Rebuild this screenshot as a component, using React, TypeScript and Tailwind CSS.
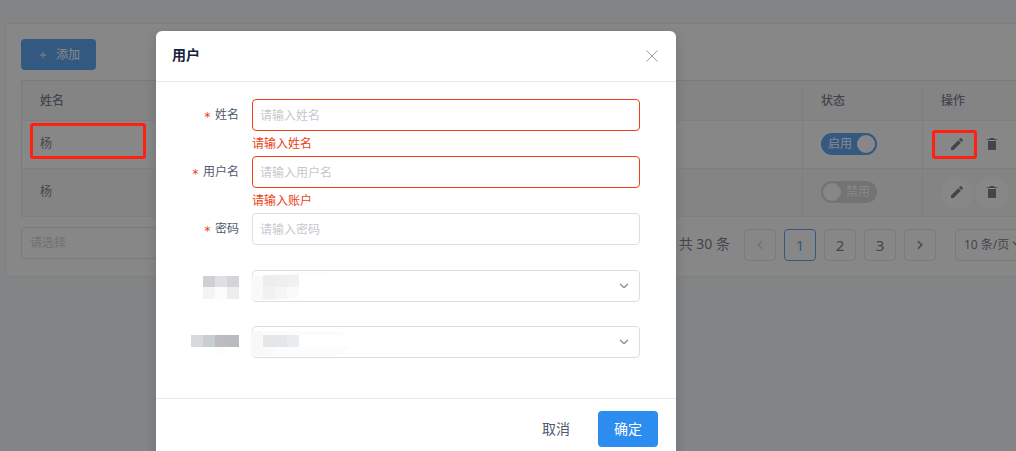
import { useState } from "react";
import type { ReactNode } from "react";
import {
  IoIosAdd,
  IoIosArrowBack,
  IoIosArrowDown,
  IoIosArrowForward,
  IoMdCreate,
  IoMdTrash,
} from "react-icons/io";

const users = [
  { id: 1, name: "杨", enabled: true },
  { id: 2, name: "杨", enabled: false },
];

const pageButton =
  "flex h-8 w-8 items-center justify-center rounded border text-[15px]";

function StatusSwitch({ initial }: { initial: boolean }) {
  const [on, setOn] = useState(initial);
  return (
    <button
      type="button"
      role="switch"
      aria-checked={on}
      aria-label="状态"
      onClick={() => setOn(!on)}
      className={`flex h-[22px] w-14 items-center justify-between rounded-full p-0.5 text-xs text-white ${
        on ? "bg-[#2d8cf0] pl-[7px]" : "flex-row-reverse bg-[#ccc] pr-[7px]"
      }`}
    >
      <span>{on ? "启用" : "禁用"}</span>
      <span className="h-[18px] w-[18px] rounded-full bg-white" />
    </button>
  );
}

function IconButton({ label, children }: { label: string; children: ReactNode }) {
  return (
    <button
      type="button"
      aria-label={label}
      className="flex h-8 w-8 items-center justify-center rounded-full bg-white pb-0.5 text-base text-[#515a6e]"
    >
      {children}
    </button>
  );
}

function UserTable() {
  return (
    <table className="w-full table-fixed border-collapse border border-[#dcdee2] text-left text-xs text-[#515a6e]">
      <thead>
        <tr className="h-10 border-b border-[#e8eaec] bg-[#f8f8f9]">
          <th className="border-r border-[#e8eaec] px-[18px] font-medium">姓名</th>
          <th className="w-[120px] border-r border-[#e8eaec] px-[18px] font-medium">状态</th>
          <th className="w-[117px] px-[18px] font-medium">操作</th>
        </tr>
      </thead>
      <tbody>
        {users.map((user) => (
          <tr key={user.id} className="h-12 border-b border-[#e8eaec] even:bg-[#f8f8f9]">
            <td className="border-r border-[#e8eaec] px-[18px] pb-0.5">{user.name}</td>
            <td className="border-r border-[#e8eaec] px-[18px] pb-0.5">
              <StatusSwitch initial={user.enabled} />
            </td>
            <td className="px-[18px]">
              <div className="flex gap-[3px]">
                <IconButton label="编辑">
                  <IoMdCreate />
                </IconButton>
                <IconButton label="删除">
                  <IoMdTrash />
                </IconButton>
              </div>
            </td>
          </tr>
        ))}
      </tbody>
    </table>
  );
}

function Pagination() {
  return (
    <nav className="flex items-center pt-0.5 text-[#515a6e]">
      <span className="mr-[14px] pb-0.5 text-sm">共 30 条</span>
      <div className="flex gap-2">
        <button type="button" aria-label="上一页" className={`${pageButton} border-[#dcdee2] text-[#c5c8ce]`}>
          <IoIosArrowBack size={12} stroke="currentColor" strokeWidth={16} />
        </button>
        <button type="button" className={`${pageButton} border-[#2d8cf0] text-[#2d8cf0]`}>
          1
        </button>
        <button type="button" className={`${pageButton} border-[#dcdee2]`}>
          2
        </button>
        <button type="button" className={`${pageButton} border-[#dcdee2]`}>
          3
        </button>
        <button type="button" aria-label="下一页" className={`${pageButton} border-[#dcdee2]`}>
          <IoIosArrowForward size={12} stroke="currentColor" strokeWidth={16} />
        </button>
      </div>
      <div className="relative ml-[19px] w-[85px]">
        <select
          aria-label="每页条数"
          className="h-8 w-full appearance-none rounded border border-[#dcdee2] bg-white pl-2 text-xs"
        >
          <option>10 条/页</option>
        </select>
        <IoIosArrowDown
          size={12}
          stroke="currentColor"
          strokeWidth={16}
          className="pointer-events-none absolute top-[9px] right-[17px]"
        />
      </div>
    </nav>
  );
}

type FieldProps = {
  id: string;
  label: string;
  placeholder: string;
  error?: string;
  type?: string;
};

function Field({ id, label, placeholder, error, type = "text" }: FieldProps) {
  return (
    <div className="flex h-[57px]">
      <label
        htmlFor={id}
        className="flex w-20 shrink-0 justify-end gap-1 pt-[7px] pr-[13px] text-xs leading-[18px] text-[#515a6e]"
      >
        <span className="pt-0.5 font-['DejaVu_Sans_Mono'] text-[#ed4014]">*</span>
        {label}
      </label>
      <div className="flex-1">
        <input
          id={id}
          type={type}
          placeholder={placeholder}
          className={`block h-8 w-full rounded border bg-white px-[7px] text-xs outline-none placeholder:text-[#c5c8ce] ${
            error ? "border-[#ed4014]" : "border-[#dcdee2]"
          }`}
        />
        {error && <p className="pt-[5px] text-xs leading-4 text-[#ed4014]">{error}</p>}
      </div>
    </div>
  );
}

function HiddenSelect({ name, label, value }: { name: string; label: ReactNode; value: ReactNode }) {
  return (
    <div className="flex h-14">
      <div className="flex w-20 shrink-0 justify-end pr-[13px]">{label}</div>
      <div className="relative h-8 flex-1">
        <select
          aria-label={name}
          className="block h-8 w-full appearance-none rounded border border-[#dcdee2] bg-white px-2 text-xs"
        />
        <div className="pointer-events-none absolute top-0 -left-px">{value}</div>
        <IoIosArrowDown
          size={12}
          stroke="currentColor"
          strokeWidth={16}
          className="pointer-events-none absolute top-[10px] right-[10px] text-[#808695]"
        />
      </div>
    </div>
  );
}

function UserModal() {
  return (
    <div
      role="dialog"
      aria-labelledby="modal-title"
      className="mt-[31px] ml-[156px] w-[520px] rounded-md bg-white shadow-[0_4px_12px_rgba(0,0,0,0.15)]"
    >
      <header className="flex h-[51px] items-center justify-between border-b border-[#e8eaec] pr-[18px] pl-4">
        <h2 id="modal-title" className="pb-0.5 text-sm font-bold text-[#17233d]">
          用户
        </h2>
        <button type="button" aria-label="关闭" className="text-[#999]">
          <svg width="12" height="12" viewBox="0 0 12 12" fill="none" stroke="currentColor">
            <path d="M0.5 0.5l11 11M11.5 0.5l-11 11" />
          </svg>
        </button>
      </header>

      <form className="pt-[17px] pr-9 pb-4 pl-4">
        <Field id="name" label="姓名" placeholder="请输入姓名" error="请输入姓名" />
        <Field id="account" label="用户名" placeholder="请输入用户名" error="请输入账户" />
        <Field id="password" label="密码" placeholder="请输入密码" type="password" />
        <HiddenSelect
          name="角色"
          label={
            <svg width="36" height="32" shapeRendering="crispEdges">
              <path fill="#cfd0d5" d="M0 6h12v11H0z" />
              <path fill="#dfe0e5" d="M12 6h12v11H12z" />
              <path fill="#d4d5d8" d="M24 6h12v11H24z" />
              <path fill="#f3f5f5" d="M0 17h12v12H0z" />
              <path fill="#fcfcfc" d="M12 17h12v12H12z" />
              <path fill="#ededed" d="M24 17h12v12H24z" />
            </svg>
          }
          value={
            <svg width="100" height="32">
              <path fill="#fcfcfc" d="M18 5Q38 0 77 3v1L48 5z" />
              <path fill="#f9f9f9" d="M0 6h18l8-1h22v21l-16 4H0z" />
              <path fill="#ededf0" d="M12 5h12v12H12z" />
              <path fill="#efefef" d="M24 5h12v12H24z" />
              <path fill="#eff1f3" d="M36 5h12v12H36z" />
              <path fill="#f1f1f1" d="M12 17h12v12H12z" />
              <path fill="#f4f5f7" d="M24 17h12v11H24z" />
              <path fill="#fafbfc" d="M36 17h12v9H36z" />
            </svg>
          }
        />
        <HiddenSelect
          name="所属部门"
          label={
            <svg width="48" height="32" shapeRendering="crispEdges">
              <path fill="#d8d9db" d="M0 9h12v12H0z" />
              <path fill="#c8ced1" d="M12 9h12v12H12z" />
              <path fill="#bbbbc1" d="M24 9h12v12H24z" />
              <path fill="#b7bcc0" d="M36 9h12v12H36z" />
              <path fill="#fdfdfd" d="M24 21h12v9H24z" />
            </svg>
          }
          value={
            <svg width="100" height="32">
              <path fill="#fcfcfc" d="M0 5h88l8 4H0zM0 21h100l-8 6q-6 3-20 3H0z" />
              <path fill="#f8f8f8" d="M0 5h12v25H0z" />
              <path fill="#fafafa" d="M12 21h12v9H12z" />
              <path fill="#e5e6e8" d="M12 9h12v12H12z" />
              <path fill="#e5e6ea" d="M24 9h12v12H24z" />
              <path fill="#e8edf0" d="M36 9h12v12H36z" />
            </svg>
          }
        />
      </form>

      <footer className="flex justify-end gap-3 border-t border-[#e8eaec] px-[18px] py-3 text-sm">
        <button type="button" className="h-9 rounded px-4 text-[#515a6e]">
          取消
        </button>
        <button type="button" className="h-9 rounded bg-[#2d8cf0] px-4 text-white">
          确定
        </button>
      </footer>
    </div>
  );
}

export default function App() {
  return (
    <div className="relative h-screen overflow-hidden bg-[#f5f7f9] font-['Noto_Sans','Noto_Sans_CJK_SC',sans-serif]">
      <main className="mt-[23px] -mr-10 ml-[5px] rounded border border-[#e8eaec] bg-white p-[15px]">
        <button
          type="button"
          className="flex h-[31px] items-center gap-1.5 rounded bg-[#2d8cf0] pr-4 pl-[15px] text-xs text-white"
        >
          <IoIosAdd size={14} />
          添加
        </button>
        <div className="mt-[10px]">
          <UserTable />
        </div>
        <div className="mt-[10px] flex items-start justify-between">
          <select
            aria-label="筛选"
            className="h-8 w-[200px] appearance-none rounded border border-[#dcdee2] bg-white px-2 text-xs text-[#c5c8ce]"
          >
            <option>请选择</option>
          </select>
          <Pagination />
        </div>
      </main>

      <div className="absolute inset-0 overflow-hidden bg-[#373737]/60">
        <UserModal />
      </div>

      {/* highlight frames on the name and the edit action */}
      <div className="pointer-events-none absolute top-[123px] left-[30px] h-9 w-[116px] rounded-[3px] border-3 border-[#ff2010]" />
      <div className="pointer-events-none absolute top-[130px] right-[39px] h-[29px] w-[45px] rounded-[3px] border-3 border-[#ff2010]" />
    </div>
  );
}
